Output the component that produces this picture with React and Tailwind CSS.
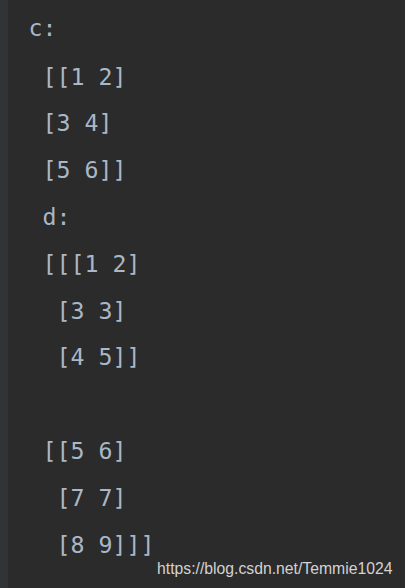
const lines = [
  "c:",
  " [[1 2]",
  " [3 4]",
  " [5 6]]",
  " d:",
  " [[[1 2]",
  "  [3 3]",
  "  [4 5]]",
  "",
  " [[5 6]",
  "  [7 7]",
  "  [8 9]]]",
];

export default function App() {
  return (
    <div className="relative flex w-[405px] h-[588px] overflow-hidden bg-[#2b2b2b]">
      {/* gutter */}
      <div className="w-[8px] shrink-0 bg-[#313335]" />

      {/* console output */}
      <div className="flex-1 pl-[20.5px] pt-[4.6px] font-['DejaVu_Sans_Mono',monospace] text-[23.25px] text-[#a9b7c6]">
        {lines.map((line, i) => (
          <div
            key={i}
            className={`whitespace-pre leading-[46.8px] ${i === 0 ? "h-[49px]" : "h-[46.8px]"}`}
          >
            {line}
          </div>
        ))}
      </div>

      {/* watermark */}
      <div className="absolute left-[157px] top-[561px] font-['Liberation_Sans',Arial,sans-serif] text-[15.75px] leading-none text-[#d2d2d2]">
        https://blog.csdn.net/Temmie1024
      </div>
    </div>
  );
}
